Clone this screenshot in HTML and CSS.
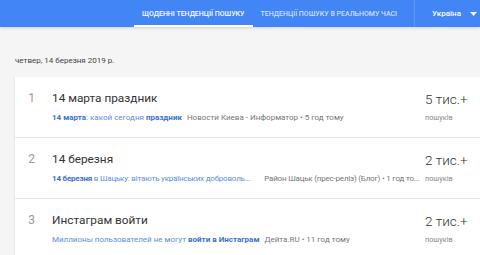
FILE: index.html
```html
<!DOCTYPE html>
<html lang="uk">
<head>
    <meta charset="UTF-8">
    <title>Тенденції пошуку</title>
    <link rel="stylesheet" href="styles.css">
</head>
<body>
    <div class="topbar">
        <div class="tabs">
            <a class="tab active" href="#daily">ЩОДЕННІ ТЕНДЕНЦІЇ ПОШУКУ</a>
            <a class="tab" href="#realtime">ТЕНДЕНЦІЇ ПОШУКУ В РЕАЛЬНОМУ ЧАСІ</a>
        </div>
        <div class="region">
            <span>Україна</span>
            <svg width="7" height="4" viewBox="0 0 7 4"><path d="M0 0h7L3.5 4z" fill="#fff"/></svg>
        </div>
    </div>

    <div class="page">
        <div class="date">четвер, 14 березня 2019 р.</div>

        <div class="card">
            <div class="row">
                <div class="rank">1</div>
                <div class="details">
                    <div class="title">14 марта праздник</div>
                    <div class="snippet">
                        <a href="#"><b>14 марта</b>: какой сегодня <b>праздник</b></a>
                        <span class="source">Новости Киева - Информатор • 5 год тому</span>
                    </div>
                </div>
                <div class="count">
                    <div class="num">5 тис.+</div>
                    <div class="label">пошуків</div>
                </div>
            </div>
            <div class="row">
                <div class="rank">2</div>
                <div class="details">
                    <div class="title">14 березня</div>
                    <div class="snippet tight">
                        <a href="#"><b>14 березня</b> в Шацьку: вітають українських доброволь...</a>
                        <span class="source wide">Район Шацьк (прес-реліз) (Блог) • 1 год то...</span>
                    </div>
                </div>
                <div class="count">
                    <div class="num">2 тис.+</div>
                    <div class="label">пошуків</div>
                </div>
            </div>
            <div class="row">
                <div class="rank">3</div>
                <div class="details">
                    <div class="title">Инстаграм войти</div>
                    <div class="snippet">
                        <a href="#">Миллионы пользователей не могут <b>войти в Инстаграм</b></a>
                        <span class="source">Дейта.RU • 11 год тому</span>
                    </div>
                </div>
                <div class="count">
                    <div class="num">2 тис.+</div>
                    <div class="label">пошуків</div>
                </div>
            </div>
        </div>
    </div>
</body>
</html>
```

FILE: styles.css
```css
body {
    margin: 0;
    font-family: Roboto, "Noto Sans", sans-serif;
    background-color: #f5f5f5;
    color: #333;
    overflow: hidden;
}

.topbar {
    height: 27px;
    background-color: #4285f4;
    box-shadow: 0 1px 3px rgba(0, 0, 0, 0.15);
    display: flex;
    align-items: stretch;
    white-space: nowrap;
}

.tabs {
    display: flex;
    margin-left: 134px;
}

.tab {
    display: flex;
    align-items: center;
    padding: 0 8px;
    font-size: 7px;
    font-weight: 500;
    color: rgba(255, 255, 255, 0.75);
    text-decoration: none;
    border-bottom: 2px solid transparent;
    border-top: 2px solid transparent;
}

.tab.active {
    color: #fff;
    border-bottom-color: #fff;
}

.region {
    margin-left: 9px;
    padding-left: 17px;
    border-left: 1px solid rgba(255, 255, 255, 0.15);
    display: flex;
    align-items: center;
    gap: 9px;
    font-size: 8px;
    font-weight: 500;
    color: #fff;
}

.page {
    padding: 29px 0 0 15px;
}

.date {
    font-size: 8px;
    color: #444;
    height: 21px;
}

.card {
    background-color: #fff;
    box-shadow: 0 1px 2px rgba(0, 0, 0, 0.12);
}

.row {
    display: flex;
    height: 60px;
    border-bottom: 1px solid #e6e6e6;
}

.rank {
    width: 33px;
    padding-top: 14px;
    text-align: center;
    font-size: 12px;
    color: #999;
}

.details {
    flex: 1;
    min-width: 0;
    padding: 14px 0 0 4px;
}

.title {
    font-size: 11.8px;
    color: #333;
    height: 22px;
}

.snippet {
    font-size: 8px;
    white-space: nowrap;
}

.snippet.tight {
    letter-spacing: -0.2px;
}

.snippet a {
    color: #5a8ee6;
    text-decoration: none;
}

.snippet b {
    color: #3b6fd1;
    font-weight: 700;
}

.source {
    margin-left: 3px;
    color: #777;
}

.source.wide {
    margin-left: 12px;
}

.count {
    width: 55px;
    padding: 14px 0 0 2px;
}

.num {
    font-size: 13.5px;
    font-weight: 300;
    color: #333;
    height: 22px;
}

.label {
    font-size: 7.3px;
    color: #888;
}
```
